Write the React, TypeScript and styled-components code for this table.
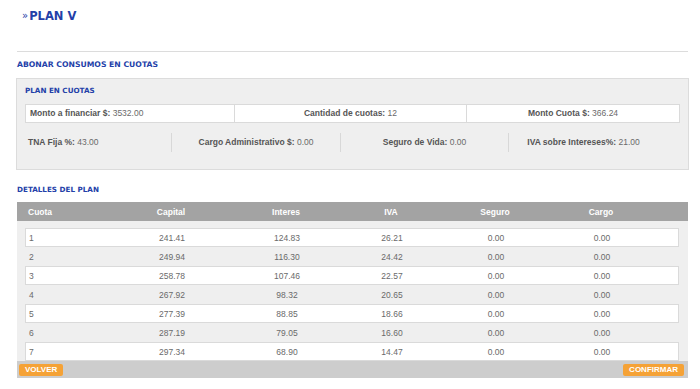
import React from 'react';
import styled, { createGlobalStyle } from 'styled-components';

const GlobalStyle = createGlobalStyle`
	html, body {
		margin: 0;
		padding: 0;
		background: #ffffff;
	}
	* {
		box-sizing: border-box;
	}
`;

const blue = '#2340a8';

const rows = [
	{ cuota: 1, capital: '241.41', interes: '124.83', iva: '26.21' },
	{ cuota: 2, capital: '249.94', interes: '116.30', iva: '24.42' },
	{ cuota: 3, capital: '258.78', interes: '107.46', iva: '22.57' },
	{ cuota: 4, capital: '267.92', interes: '98.32', iva: '20.65' },
	{ cuota: 5, capital: '277.39', interes: '88.85', iva: '18.66' },
	{ cuota: 6, capital: '287.19', interes: '79.05', iva: '16.60' },
	{ cuota: 7, capital: '297.34', interes: '68.90', iva: '14.47' }
];

const App = () => {
	return (
		<>
			<GlobalStyle />
			<ScPage>
				<ScTitle>
					<ScChevron>»</ScChevron>PLAN V
				</ScTitle>

				<ScSectionTitle>ABONAR CONSUMOS EN CUOTAS</ScSectionTitle>

				<ScPanel>
					<ScPanelTitle>PLAN EN CUOTAS</ScPanelTitle>
					<ScBoxRow>
						<ScBox>
							<b>Monto a financiar $:</b> 3532.00
						</ScBox>
						<ScBox centered>
							<b>Cantidad de cuotas:</b> 12
						</ScBox>
						<ScBox centered>
							<b>Monto Cuota $:</b> 366.24
						</ScBox>
					</ScBoxRow>
					<ScInfoRow>
						<ScInfo>
							<b>TNA Fija %:</b> 43.00
						</ScInfo>
						<ScInfo centered divided>
							<b>Cargo Administrativo $:</b> 0.00
						</ScInfo>
						<ScInfo centered divided>
							<b>Seguro de Vida:</b> 0.00
						</ScInfo>
						<ScInfo centered divided last>
							<b>IVA sobre Intereses%:</b> 21.00
						</ScInfo>
					</ScInfoRow>
				</ScPanel>

				<ScDetailTitle>DETALLES DEL PLAN</ScDetailTitle>

				<ScTable>
					<ScHeader>
						<ScCell first>Cuota</ScCell>
						<ScCell>Capital</ScCell>
						<ScCell>Interes</ScCell>
						<ScCell>IVA</ScCell>
						<ScCell>Seguro</ScCell>
						<ScCell>Cargo</ScCell>
					</ScHeader>
					<ScBody>
						{rows.map((row, i) => (
							<ScRow key={row.cuota} striped={i % 2 === 0}>
								<ScCell first>{row.cuota}</ScCell>
								<ScCell>{row.capital}</ScCell>
								<ScCell>{row.interes}</ScCell>
								<ScCell>{row.iva}</ScCell>
								<ScCell>0.00</ScCell>
								<ScCell>0.00</ScCell>
							</ScRow>
						))}
					</ScBody>
					<ScFooter>
						<ScButton>VOLVER</ScButton>
						<ScButton>CONFIRMAR</ScButton>
					</ScFooter>
				</ScTable>
			</ScPage>
		</>
	);
};

export default App;

const ScPage = styled.div`
	width: 700px;
	padding: 0 12px 0 17px;
	font-family: 'Liberation Sans', Arial, sans-serif;
	font-size: 8.5px;
	color: #6a6a6a;
`;

const ScTitle = styled.h1`
	margin: 0;
	height: 52px;
	padding: 0 0 19px 5px;
	line-height: 32px;
	font-family: 'DejaVu Sans', Verdana, sans-serif;
	font-size: 11.5px;
	font-weight: bold;
	color: ${blue};
	border-bottom: 1px solid #dcdcdc;
`;

const ScChevron = styled.span`
	font-weight: normal;
	font-size: 10px;
	margin-right: 1px;
	position: relative;
	top: -1px;
`;

const ScSectionTitle = styled.h2`
	margin: 0;
	height: 26px;
	line-height: 25px;
	font-family: 'DejaVu Sans', Verdana, sans-serif;
	font-size: 7.7px;
	font-weight: bold;
	color: ${blue};
`;

const ScPanel = styled.div`
	height: 92px;
	margin-right: -1px;
	margin-left: -1px;
	padding: 0 8px 0 8px;
	background: #efefef;
	border: 1px solid #dcdcdc;
`;

const ScPanelTitle = styled.div`
	height: 25px;
	line-height: 24px;
	font-family: 'DejaVu Sans', Verdana, sans-serif;
	font-size: 7.2px;
	font-weight: bold;
	color: ${blue};
`;

const ScBoxRow = styled.div`
	display: grid;
	grid-template-columns: 210px 232px 1fr;
	height: 19px;
`;

const ScBox = styled.div<{ centered?: boolean }>`
	background: #ffffff;
	border: 1px solid #dadada;
	margin-left: -1px;
	padding: 0 4px;
	line-height: 17px;
	text-align: ${props => props.centered ? 'center' : 'left'};

	&:first-child {
		margin-left: 0;
	}

	b {
		color: #555;
	}
`;

const ScInfoRow = styled.div`
	display: grid;
	grid-template-columns: 146px 169px 168px 1fr;
	padding-top: 10px;
`;

const ScInfo = styled.div<{ centered?: boolean; divided?: boolean; last?: boolean }>`
	height: 19px;
	line-height: 19px;
	padding-left: ${props => props.centered ? '0' : '3px'};
	padding-right: ${props => props.last ? '22px' : '0'};
	text-align: ${props => props.centered ? 'center' : 'left'};
	border-left: ${props => props.divided ? '1px solid #d8d8d8' : 'none'};

	b {
		color: #555;
	}
`;

const ScDetailTitle = styled.h2`
	margin: 0;
	height: 32px;
	padding-top: 6px;
	display: flex;
	align-items: center;
	font-family: 'DejaVu Sans', Verdana, sans-serif;
	font-size: 7.2px;
	font-weight: bold;
	color: ${blue};
`;

const ScTable = styled.div`
	display: flex;
	flex-direction: column;
`;

const columns = '84px 124px 106px 104px 104px 108px 1fr';

const ScHeader = styled.div`
	display: grid;
	grid-template-columns: ${columns};
	height: 19px;
	padding: 0 8px;
	align-items: center;
	background: #a3a3a3;
	color: #ffffff;
	font-weight: bold;
`;

const ScBody = styled.div`
	height: 140px;
	padding: 7px 8px 0;
	background: #efefef;
	overflow: hidden;
`;

const ScRow = styled.div<{ striped?: boolean }>`
	display: grid;
	grid-template-columns: ${columns};
	height: 19px;
	align-items: center;
	margin-right: 1px;
	background: ${props => props.striped ? '#ffffff' : 'transparent'};
	border: 1px solid ${props => props.striped ? '#dadada' : 'transparent'};
`;

const ScCell = styled.div<{ first?: boolean }>`
	text-align: ${props => props.first ? 'left' : 'center'};
	padding-left: ${props => props.first ? '3px' : '0'};
	white-space: nowrap;
`;

const ScFooter = styled.div`
	height: 17px;
	display: flex;
	align-items: center;
	justify-content: space-between;
	padding: 0 4px 0 2px;
	background: #cdcdcd;
`;

const ScButton = styled.button`
	height: 12px;
	margin-top: 1px;
	padding: 0 6px;
	border: none;
	border-radius: 2px;
	background: #f5a236;
	color: #ffffff;
	font-family: 'Liberation Sans', Arial, sans-serif;
	font-size: 8px;
	font-weight: bold;
	line-height: 12px;
	cursor: pointer;
`;
